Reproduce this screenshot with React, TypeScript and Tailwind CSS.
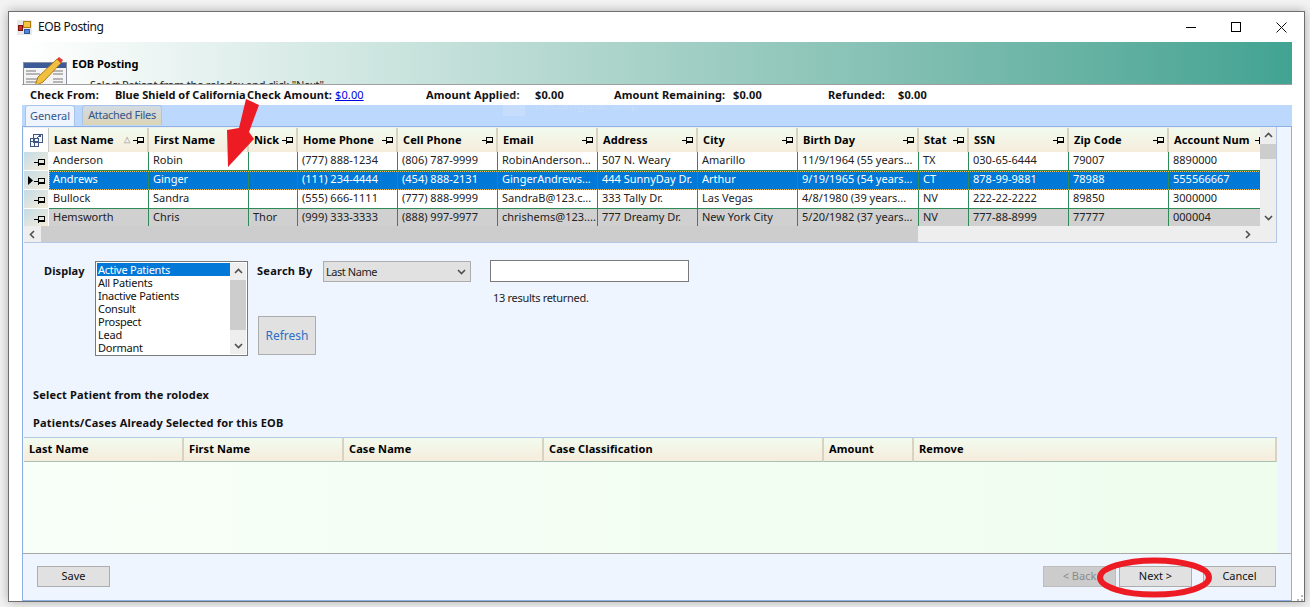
import React from "react";

const fontCls = "font-['Noto_Sans','Open_Sans',sans-serif]";

function Pin({ className = "" }: { className?: string }) {
  return (
    <svg width="11" height="9" viewBox="0 0 11 9" className={className} shapeRendering="crispEdges">
      <path d="M0 4.5H4M4.5 1V8M4.5 1.5H10.5V6.5H4.5M4.5 5.5H10.5" stroke="#000" fill="none" strokeWidth="1" />
    </svg>
  );
}

function AppIcon() {
  return (
    <svg width="15" height="15" viewBox="0 0 15 15" shapeRendering="crispEdges">
      <rect x="0" y="0" width="15" height="15" fill="#e8e8e8" />
      <rect x="6.5" y="1.5" width="7" height="6" fill="#f6c443" stroke="#a87a10" />
      <rect x="1.5" y="5.5" width="4" height="5" fill="#d8281f" stroke="#7a1410" />
      <rect x="7.5" y="9.5" width="5" height="4" fill="#4f86d8" stroke="#2a5aa0" />
    </svg>
  );
}

function BannerIcon() {
  return (
    <svg width="46" height="30" viewBox="0 0 46 30">
      <rect x="0.5" y="6.5" width="43" height="26" fill="#f4f4f6" stroke="#8c8fa0" />
      <rect x="1" y="7" width="42" height="5" fill="#3d5a98" />
      <path d="M3 15H13M3 18H17M3 23H14M3 26H14M30 15H40M30 18H40M30 23H40M30 26H40" stroke="#777" />
      <path d="M12 30L15 21L34 3L38 7L20 26Z" fill="#f1c040" stroke="#a97b12" />
      <path d="M34 3L36 1L40 4L38 7Z" fill="#e23b3b" />
    </svg>
  );
}

function ColumnChooser() {
  return (
    <svg width="15" height="15" viewBox="0 0 15 15" shapeRendering="crispEdges">
      <path d="M4.5 1.5H13.5V9.5H4.5ZM1.5 5.5H9.5V13.5H1.5ZM1.5 8.5H9.5M5.5 5.5V13.5" stroke="#3f5684" fill="#f4f6fb" />
      <path d="M8 5L11 2.5M9.5 2.5H11.5V4" stroke="#3f5684" fill="none" />
    </svg>
  );
}

function Chevron({ dir, className = "" }: { dir: "up" | "down" | "left" | "right"; className?: string }) {
  const d = {
    up: "M1 6L4.5 2.5L8 6",
    down: "M1 3L4.5 6.5L8 3",
    left: "M6 1L2.5 4.5L6 8",
    right: "M3 1L6.5 4.5L3 8",
  }[dir];
  return (
    <svg width="9" height="9" viewBox="0 0 9 9" className={className}>
      <path d={d} fill="none" stroke="#505050" strokeWidth="1.6" />
    </svg>
  );
}

const cols = [
  { t: "Last Name", w: "w-[100px]" },
  { t: "First Name", w: "w-[100px]" },
  { t: "Nick", w: "w-[49px]" },
  { t: "Home Phone", w: "w-[100px]" },
  { t: "Cell Phone", w: "w-[100px]" },
  { t: "Email", w: "w-[100px]" },
  { t: "Address", w: "w-[100px]" },
  { t: "City", w: "w-[100px]" },
  { t: "Birth Day", w: "w-[121px]" },
  { t: "Stat", w: "w-[50px]" },
  { t: "SSN", w: "w-[100px]" },
  { t: "Zip Code", w: "w-[100px]" },
  { t: "Account Num", w: "w-[100px]" },
];

const rows = [
  { kind: "plain", cells: ["Anderson", "Robin", "", "(777) 888-1234", "(806) 787-9999", "RobinAnderson...", "507 N. Weary", "Amarillo", "11/9/1964 (55 years...", "TX", "030-65-6444", "79007", "8890000"] },
  { kind: "sel", cells: ["Andrews", "Ginger", "", "(111) 234-4444", "(454) 888-2131", "GingerAndrews...", "444 SunnyDay Dr.", "Arthur", "9/19/1965 (54 years...", "CT", "878-99-9881", "78988", "555566667"] },
  { kind: "plain", cells: ["Bullock", "Sandra", "", "(555) 666-1111", "(777) 888-9999", "SandraB@123.c...", "333 Tally Dr.", "Las Vegas", "4/8/1980 (39 years...", "NV", "222-22-2222", "89850", "3000000"] },
  { kind: "gray", cells: ["Hemsworth", "Chris", "Thor", "(999) 333-3333", "(888) 997-9977", "chrishems@123....", "777 Dreamy Dr.", "New York City", "5/20/1982 (37 years...", "NV", "777-88-8999", "77777", "000004"] },
];

const lowerCols = [
  { t: "Last Name", w: "w-[160px]" },
  { t: "First Name", w: "w-[160px]" },
  { t: "Case Name", w: "w-[200px]" },
  { t: "Case Classification", w: "w-[280px]" },
  { t: "Amount", w: "w-[90px]" },
  { t: "Remove", w: "flex-1" },
];

const listItems = ["Active Patients", "All Patients", "Inactive Patients", "Consult", "Prospect", "Lead", "Dormant"];

const headCell = "h-[24px] shrink-0 flex items-center border-r-2 border-r-[#d9d2c0] bg-gradient-to-b from-[#f1fbee] to-[#f6ecdc] text-[11px] font-bold tracking-[0.1px] text-black";

export default function App() {
  return (
    <div className={`relative w-[1310px] h-[607px] overflow-hidden bg-[#f3f3f3] pl-[8px] pt-[11px] text-[11px] text-black ${fontCls}`}>
      <div className="w-[1297px] h-[591px] bg-white border border-[#6f6f6f] flex flex-col shadow-[0_0_10px_rgba(0,0,0,0.3)]">
        {/* title bar */}
        <div className="h-[30px] shrink-0 flex items-center pl-[8px]">
          <AppIcon />
          <span className="ml-[6px] text-[12px] tracking-[-0.35px] text-[#111]">EOB Posting</span>
          <div className="ml-auto flex items-center gap-[35px] pr-[17px]">
            <div className="w-[10px] h-[1px] bg-black" />
            <div className="w-[10px] h-[10px] border border-black" />
            <svg width="11" height="11" viewBox="0 0 11 11">
              <path d="M0.5 0.5L10.5 10.5M10.5 0.5L0.5 10.5" stroke="#111" fill="none" />
            </svg>
          </div>
        </div>
        {/* body */}
        <div className="flex-1 min-h-0 flex flex-col pl-[13px] pr-[12px]">
          <div className="h-[43px] shrink-0 overflow-hidden border-b border-b-[#a0a0a0] bg-gradient-to-r from-white to-[#41a392] flex">
            <div className="pl-[1px] pt-[14px] shrink-0">
              <BannerIcon />
            </div>
            <div className="pl-[3px] pt-[14px]">
              <div className="font-bold leading-[15px]">EOB Posting</div>
              <div className="pl-[18px] pt-[6px] leading-[15px] tracking-[-0.2px] text-[#222]">Select Patient from the rolodex and click "Next"</div>
            </div>
          </div>
          <div className="h-[20px] shrink-0 flex items-center pl-[8px] font-bold text-[11px] tracking-[0.12px] text-[#111] relative">
            <span className="w-[85px] whitespace-nowrap">Check From:</span>
            <span className="w-[132px] whitespace-nowrap tracking-normal">Blue Shield of California</span>
            <span className="w-[88px] whitespace-nowrap">Check Amount:</span>
            <span className="w-[91px] font-normal text-[#0000e0] underline">$0.00</span>
            <span className="w-[109px] whitespace-nowrap">Amount Applied:</span>
            <span className="w-[79px]">$0.00</span>
            <span className="w-[119px] whitespace-nowrap">Amount Remaining:</span>
            <span className="w-[95px]">$0.00</span>
            <span className="w-[70px]">Refunded:</span>
            <span>$0.00</span>
          </div>
          {/* tab strip */}
          <div className="h-[22px] shrink-0 bg-[#bcd8fd] flex items-end pl-[3px] gap-[7px] border-b border-b-[#8fb2e6]">
            <div className="w-[50px] h-[21px] bg-[#eef5fe] border border-b-0 border-[#a9c4ea] rounded-t-[3px] flex items-center justify-center text-[#34558f] tracking-[-0.1px]">General</div>
            <div className="w-[80px] h-[20px] mb-[1px] bg-gradient-to-b from-[#d2dbe4] to-[#dcd4b4] border border-b-0 border-[#a9c4ea] rounded-t-[3px] flex items-center justify-center text-[#34558f] whitespace-nowrap tracking-[-0.3px]">Attached Files</div>
          </div>
          {/* panel */}
          <div className="flex-1 min-h-0 bg-[#eef5fe] border-l border-r border-b border-[#8fb2e6] flex flex-col pl-[1px] pr-[14px]">
            {/* top grid */}
            <div className="h-[116px] shrink-0 bg-[#eeeeee] border-b border-r border-[#b5c8e4] flex flex-col">
              <div className="flex h-[99px] shrink-0">
                <div className="w-[1236px] overflow-hidden flex flex-col">
                  <div className="flex pt-[1px] h-[25px] shrink-0">
                    <div className="w-[25px] h-[24px] shrink-0 flex items-center justify-center bg-white border-r border-[#c8c8c8]">
                      <ColumnChooser />
                    </div>
                    {cols.map((c, i) => (
                      <div key={c.t} className={`${headCell} ${c.w} pl-[5px] relative`}>
                        <span className="whitespace-nowrap">{c.t}</span>
                        {i === 0 && <span className="absolute right-[17px] top-[5px] text-[8px] text-[#b0b0b0]">△</span>}
                        <Pin className={i < 12 ? "absolute right-[3px] top-[8px]" : "absolute right-[1px] top-[8px]"} />
                      </div>
                    ))}
                  </div>
                  {rows.map((r) => {
                    const sel = r.kind === "sel";
                    const bg = sel ? "bg-[#0078d7] text-white" : r.kind === "gray" ? "bg-[#d0d0d0] text-[#222]" : "bg-white text-[#222]";
                    return (
                      <div key={r.cells[0]} className="flex h-[19px] shrink-0">
                        <div className="w-[25px] shrink-0 relative bg-gradient-to-br from-[#c4dce6] to-[#f5ecd9] border-r border-b border-[#ffffff] flex items-center justify-end pr-[3px]">
                          {sel && (
                            <svg width="5" height="9" viewBox="0 0 5 9" className="absolute left-[4px] top-[5px]">
                              <path d="M0 0L5 4.5L0 9Z" fill="#000" />
                            </svg>
                          )}
                          <Pin className="mt-[2px]" />
                        </div>
                        <div className={`flex flex-1 ${bg} ${sel ? "outline outline-1 -outline-offset-1 outline-dotted outline-[#e8c060]" : "border-b border-b-[#2e8b57]"}`}>
                          {r.cells.map((t, i) => (
                            <div key={i} className={`${cols[i].w} shrink-0 border-r border-r-[#2e8b57] pl-[4px] leading-[15px] whitespace-nowrap overflow-hidden`}>
                              {t}
                            </div>
                          ))}
                        </div>
                      </div>
                    );
                  })}
                </div>
                <div className="w-[16px] shrink-0 flex flex-col items-center">
                  <div className="h-[17px] flex items-center"><Chevron dir="up" /></div>
                  <div className="w-full h-[15px] bg-[#cdcdcd]" />
                  <div className="flex-1" />
                  <div className="h-[17px] flex items-center"><Chevron dir="down" /></div>
                </div>
              </div>
              <div className="flex-1 flex items-center">
                <div className="w-[17px] h-full flex items-center justify-center shrink-0 bg-[#eeeeee]"><Chevron dir="left" /></div>
                <div className="w-[877px] h-full bg-[#cdcdcd] shrink-0" />
                <div className="flex-1" />
                <Chevron dir="right" className="mr-[24px]" />
              </div>
            </div>
            {/* filter area */}
            <div className="h-[139px] shrink-0 flex pt-[18px] pl-[20px]">
              <span className="w-[51px] pt-[1px] font-bold tracking-[0.1px] leading-[18px] text-[#111]">Display</span>
              <div className="w-[153px] h-[95px] border border-[#7a7a7a] bg-white flex shrink-0 p-[1px]">
                <div className="flex-1 leading-[13px] text-[#111] tracking-[-0.25px]">
                  {listItems.map((t, i) => (
                    <div key={t} className={`pl-[1px] h-[13px] ${i === 0 ? "bg-[#0078d7] text-white" : ""}`}>{t}</div>
                  ))}
                </div>
                <div className="w-[16px] bg-[#eeeeee] flex flex-col items-center">
                  <div className="h-[17px] flex items-center"><Chevron dir="up" /></div>
                  <div className="w-full h-[50px] bg-[#cdcdcd]" />
                  <div className="flex-1" />
                  <div className="h-[17px] flex items-center"><Chevron dir="down" /></div>
                </div>
              </div>
              <div className="w-[66px] ml-[9px] shrink-0 flex flex-col">
                <span className="pt-[1px] font-bold tracking-[0.25px] leading-[18px] text-[#111] whitespace-nowrap">Search By</span>
                <div className="mt-[36px] ml-[1px] w-[58px] h-[39px] bg-[#e1e1e1] border border-[#adadad] flex items-center justify-center text-[12px] text-[#2f6fc4]">Refresh</div>
              </div>
              <div className="w-[148px] h-[21px] bg-[#e1e1e1] border border-[#adadad] flex items-center justify-between pl-[2px] pr-[4px] shrink-0 text-[#222]">
                <span className="pt-[1px] tracking-[-0.45px]">Last Name</span>
                <Chevron dir="down" />
              </div>
              <div className="ml-[19px] flex flex-col">
                <div className="w-[199px] h-[22px] -mt-[1px] bg-white border border-[#7a7a7a]" />
                <span className="pl-[3px] mt-[8px] tracking-[-0.3px] text-[#222]">13 results returned.</span>
              </div>
            </div>
            <div className="h-[28px] shrink-0 pl-[9px] pt-[5px] font-bold tracking-[0.17px] leading-[15px] text-[#111]">Select Patient from the rolodex</div>
            <div className="h-[27px] shrink-0 pl-[9px] pt-[5px] font-bold tracking-[0.17px] leading-[15px] text-[#111]">Patients/Cases Already Selected for this EOB</div>
            {/* lower grid */}
            <div className="h-[116px] shrink-0 flex flex-col border-t border-[#b5c8e4] bg-gradient-to-r from-[#f8fff8] to-[#eefdee]">
              <div className="flex">
                {lowerCols.map((c) => (
                  <div key={c.t} className={`${headCell} ${c.w} pl-[5px] border-b border-b-[#a8c0b8]`}>{c.t}</div>
                ))}
              </div>
            </div>
            <div className="h-[1px] shrink-0 -mr-[14px] -ml-[1px] bg-[#a8a8a8]" />
            {/* bottom bar */}
            <div className="flex-1 flex items-center pl-[13px] pr-[1px] pb-[1px]">
              <div className="w-[73px] h-[21px] bg-[#e1e1e1] border border-[#adadad] flex items-center justify-center text-[#111]">Save</div>
              <div className="ml-auto w-[73px] h-[21px] bg-[#cccccc] border border-[#bdbdbd] flex items-center justify-center text-[#8a8a8a]">&lt; Back</div>
              <div className="ml-[3px] w-[73px] h-[21px] bg-[#e1e1e1] border border-[#adadad] flex items-center justify-center text-[#111]">Next &gt;</div>
              <div className="ml-[11px] w-[73px] h-[21px] bg-[#e1e1e1] border border-[#adadad] flex items-center justify-center text-[#111]">Cancel</div>
            </div>
          </div>
        </div>
      </div>
      {/* faint snipping tool ghost, then the annotations laid over the screenshot */}
      <div className="absolute left-[503px] top-[94px] flex items-center gap-[10px] text-[13px] text-white/15 pointer-events-none">
        <div className="w-[22px] h-[22px] bg-white/15" />
        <span className="whitespace-nowrap">Rectangular Snip</span>
      </div>
      <svg className="absolute left-0 top-0 pointer-events-none" width="1310" height="607" viewBox="0 0 1310 607">
        <polygon points="246,99 259,105 249,132 254,139 228,167 227,130 239,128" fill="#ed1c24" />
        <ellipse cx="1154.5" cy="577.5" rx="54.5" ry="17" fill="none" stroke="#ed1c24" strokeWidth="6" />
        <g fill="#b8b8b8">
          <rect x="1301" y="595" width="2" height="2" />
          <rect x="1297" y="599" width="2" height="2" />
          <rect x="1301" y="599" width="2" height="2" />
        </g>
      </svg>
    </div>
  );
}
